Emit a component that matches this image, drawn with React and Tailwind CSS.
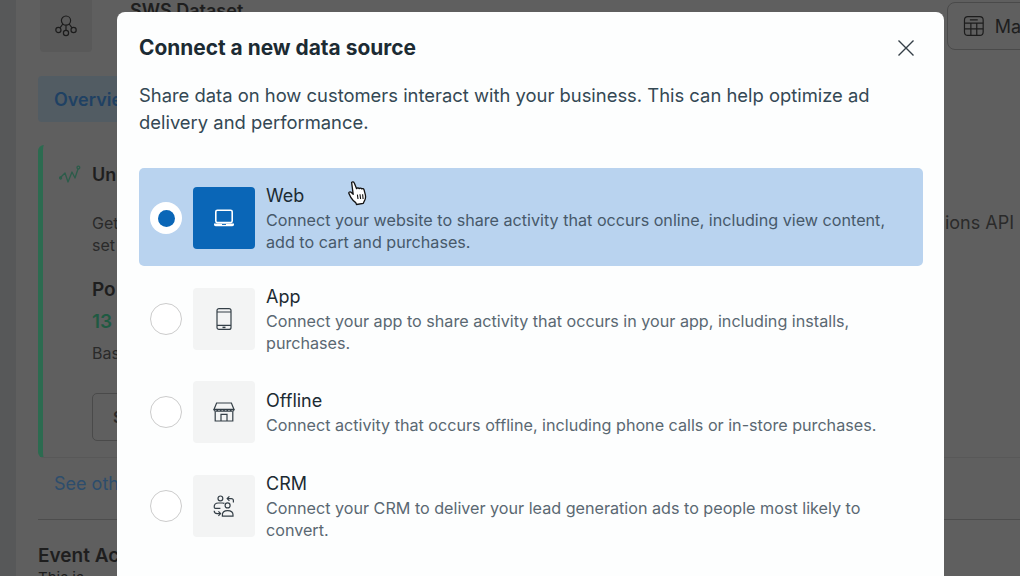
import React from 'react';

const font = { fontFamily: '"Inter", "Liberation Sans", sans-serif' };

function LaptopIcon() {
  return (
    <svg width="24" height="24" viewBox="0 0 24 24" fill="none">
      <rect x="3.8" y="4.2" width="16.4" height="12.4" rx="1.6" stroke="#fff" strokeWidth="1.6" />
      <path d="M2 17.6h20v.9c0 1-.8 1.7-1.7 1.7H3.7c-1 0-1.7-.7-1.7-1.7z" fill="#fff" />
      <rect x="10" y="18" width="4" height="0.9" fill="#0a66b7" />
    </svg>
  );
}

function TabletIcon() {
  return (
    <svg width="24" height="24" viewBox="0 0 24 24" fill="none" stroke="#343f47" strokeWidth="1.2">
      <rect x="5" y="1.6" width="14" height="20.8" rx="2" />
      <path d="M5 5h14M5 18.4h14" />
      <path d="M10.5 20.4h3" strokeWidth="1.5" />
    </svg>
  );
}

function StoreIcon() {
  return (
    <svg width="24" height="24" viewBox="0 0 24 24" fill="none" stroke="#343f47" strokeWidth="1.2">
      <path d="M4.6 3h14.8l2.6 6.4H2z" />
      <path d="M2 9.4c0 2.4 3.3 2.4 3.3 0 0 2.4 3.4 2.4 3.4 0 0 2.4 3.3 2.4 3.3 0 0 2.4 3.3 2.4 3.3 0 0 2.4 3.4 2.4 3.4 0 0 2.4 3.3 2.4 3.3 0" />
      <path d="M3.2 11.4V21h17.6v-9.6" />
      <path d="M9 21v-6.6h6V21" />
    </svg>
  );
}

function CrmIcon() {
  return (
    <svg width="24" height="24" viewBox="0 0 24 24" fill="none" stroke="#343f47" strokeWidth="1.2">
      <circle cx="8.4" cy="4.4" r="2.4" />
      <path d="M2.2 13c0-2.6 1.8-4 4-4h4.2c.8 0 1.4.1 2 .4" />
      <path d="M2.2 13c0 .8.5 1.3 1.2 1.3h5" />
      <path d="M2.2 16.8c0 1.6 1.2 2.8 3 2.8h3.2" />
      <path d="M6.4 17.4l2.2 2.2-2.2 2.2" />
      <circle cx="15.6" cy="11.4" r="2.5" />
      <path d="M10.4 22.2v-1.4c0-2.4 2-4.2 5.2-4.2s5.4 1.8 5.4 4.2v1.4z" />
      <path d="M21.4 8.4V6.6c0-1.2-.9-2-2-2h-4" />
      <path d="M17.4 2.4l-2.2 2.2 2.2 2.2" />
    </svg>
  );
}

function DatasetIcon() {
  return (
    <svg width="24" height="24" viewBox="0 0 24 24" fill="none" stroke="#1c1c1c" strokeWidth="1.2">
      <circle cx="12" cy="6.6" r="4.6" />
      <circle cx="4.4" cy="16" r="2.6" />
      <circle cx="12" cy="19" r="2.6" />
      <circle cx="19.6" cy="16" r="2.6" />
      <path d="M8.8 10 6 13.8M12 11.2v5.2M15.2 10l2.8 3.8" />
    </svg>
  );
}

function TableIcon() {
  return (
    <svg width="22" height="22" viewBox="0 0 22 22" fill="none" stroke="#1c1c1c" strokeWidth="1.2">
      <rect x="1.5" y="1.5" width="19" height="19" rx="3.5" />
      <path d="M1.5 8h19M1.5 14h19M8 8v12.5M14 8v12.5M7 4.8h8" />
    </svg>
  );
}

function TrendIcon() {
  return (
    <svg width="22" height="20" viewBox="0 0 22 20" fill="none" stroke="#2c5c4a" strokeWidth="1.3" strokeLinejoin="round">
      <path d="M1 13l5-5 3 9 4-10 3 6 3-9" />
      <circle cx="19.4" cy="2.6" r="1.4" />
      <circle cx="1.6" cy="13" r="1" />
    </svg>
  );
}

function HandCursor() {
  return (
    <svg width="20" height="26" viewBox="0 0 20 26" className="absolute left-[348px] top-[180px]">
      <path
        d="M3.6 2.4c.9-1 2.2-.6 2.7.7l2.3 5.6c.3-1 2-1.2 2.6-.1.5-.8 2-.8 2.5.3.7-.5 2-.2 2.3.8l1.3 5c.6 2.4.2 4.6-1 6.4l-1 2.2-6.8 1.2-.8-1.9c-2-1.3-3.6-3.1-4.7-4.9L1 13.6c-.6-1.1.6-2.3 1.8-1.5l2.4 2.2z"
        fill="#fff"
        stroke="#111"
        strokeWidth="1.3"
        strokeLinejoin="round"
      />
      <path d="M9.4 14.6l.6 4.4M12 14.2l.6 4.8M14.6 14.2l.5 4.8" stroke="#111" strokeWidth="1.1" />
    </svg>
  );
}

function SourceRow({ title, icon, selected, rowClass, children }) {
  return (
    <div className={`flex items-center rounded-[5px] pl-[11px] pr-[24px] ${selected ? 'bg-[#b9d3ef]' : ''} ${rowClass}`}>
      {selected ? (
        <div className="flex h-8 w-8 shrink-0 items-center justify-center rounded-full bg-white">
          <div className="h-[17px] w-[17px] rounded-full bg-[#0a66b7]" />
        </div>
      ) : (
        <div className="h-8 w-8 shrink-0 rounded-full border-[1.5px] border-[#cccccc] bg-white" />
      )}
      <div className={`ml-[11px] flex h-[62px] w-[62px] shrink-0 items-center justify-center rounded-[4px] ${selected ? 'bg-[#0a66b7]' : 'bg-[#f3f4f4]'}`}>
        {icon}
      </div>
      <div className="ml-[11px] min-w-0">
        <div className="text-[18px] leading-[25px] text-[#1c2b33]">{title}</div>
        <div className={`mt-[1px] text-[16.15px] leading-[22px] ${selected ? 'text-[#47596a]' : 'text-[#5a6872]'}`}>{children}</div>
      </div>
    </div>
  );
}

export default function App() {
  return (
    <div className="relative h-[576px] w-[1020px] overflow-hidden bg-[#5f5f5f]" style={font}>
      {/* dimmed page behind the dialog */}
      <div className="flex h-full">
        <div className="w-4 shrink-0 bg-[#575859]" />
        <div className="min-w-0 flex-1 pl-[22px]">
          <div className="flex h-[76px] items-start">
            <div className="ml-[2px] flex h-[52px] w-[52px] items-center justify-center rounded-b-[4px] bg-[#595959]">
              <DatasetIcon />
            </div>
            <div className="ml-[38px] text-[18px] font-semibold leading-[22px] text-[#1e1e1e]">SWS Dataset</div>
            <div className="ml-auto mr-[-2px] mt-[2px] flex h-12 w-[75px] items-center gap-[10px] rounded-l-[8px] border border-[#4a4a4a] pl-[15px] text-[18px] text-[#1e1e1e]">
              <TableIcon />
              <span>Ma</span>
            </div>
          </div>
          <div className="flex h-[46px] w-[120px] items-center rounded-[4px] bg-[#525c63] pl-4 text-[18px] font-semibold text-[#1f4163]">Overview</div>
          <div className="mt-[23px] flex h-[313px] rounded-l-[6px] border-b border-l-[5px] border-b-[#585858] border-l-[#2c6b50] pl-[16px] pt-[16px]">
            <div className="min-w-0 flex-1">
              <div className="flex items-center gap-[11px] text-[18px] font-semibold text-[#1e1e1e]">
                <TrendIcon />
                <span>Unlock</span>
              </div>
              <div className="mt-[24px] text-[16px] leading-[22px] text-[#2a2a2a]">
                <div className="flex justify-between pr-[6px]">
                  <span className="pl-[33px]">Get</span>
                  <span className="text-[18px]">ions API</span>
                </div>
                <div className="pl-[33px]">set</div>
              </div>
              <div className="mt-[21px] pl-[33px] text-[19px] font-semibold leading-[26px] text-[#1e1e1e]">Po</div>
              <div className="mt-[6px] pl-[33px] text-[19px] font-semibold leading-[26px] text-[#1f5a42]">13</div>
              <div className="mt-[6px] pl-[33px] text-[16px] leading-[24px] text-[#2a2a2a]">Bas</div>
              <div className="ml-[33px] mt-[28px] flex h-12 w-[80px] items-center rounded-[5px] border border-[#4a4a4a] pl-[20px] text-[16px] font-semibold text-[#2a2a2a]">See</div>
            </div>
          </div>
          <div className="mt-[14px] pl-4 text-[18px] leading-[24px] text-[#2d4d6c]">See other</div>
          <div className="mt-[23px] h-px bg-[#4d4d4d]" />
          <div className="mt-[24px] text-[19px] font-semibold leading-[24px] text-[#1e1e1e]">Event Activity</div>
          <div className="text-[15px] leading-[20px] text-[#1e1e1e]">This is</div>
        </div>
      </div>

      {/* dialog */}
      <div className="absolute left-[117px] top-3 h-[600px] w-[827px] rounded-[8px] bg-[#fdfefe] px-[22px] pt-[22px]">
        <div className="flex items-center justify-between">
          <h2 className="text-[20.9px] font-bold leading-[28px] text-[#1c2b33]">Connect a new data source</h2>
          <svg width="18" height="18" viewBox="0 0 18 18" fill="none" stroke="#343f47" strokeWidth="1.4" className="mr-[7px]">
            <path d="M1.5 1.5l15 15M16.5 1.5l-15 15" />
          </svg>
        </div>
        <p className="mt-[20px] text-[18.4px] leading-[27px] text-[#344854]">
          Share data on how customers interact with your business. This can help optimize ad delivery and performance.
        </p>
        <div className="mt-[32px] w-[784px]">
          <SourceRow title="Web" icon={<LaptopIcon />} selected rowClass="pt-[15px] pb-[13px]">
            Connect your website to share activity that occurs online, including view content, add to cart and purchases.
          </SourceRow>
          <SourceRow title="App" icon={<TabletIcon />} rowClass="pt-[18px] pb-[13px]">
            Connect your app to share activity that occurs in your app, including installs, purchases.
          </SourceRow>
          <SourceRow title="Offline" icon={<StoreIcon />} rowClass="py-[14px]">
            Connect activity that occurs offline, including phone calls or in-store purchases.
          </SourceRow>
          <SourceRow title="CRM" icon={<CrmIcon />} rowClass="pt-[14px] pb-[14px]">
            Connect your CRM to deliver your lead generation ads to people most likely to convert.
          </SourceRow>
        </div>
      </div>

      <HandCursor />
    </div>
  );
}
